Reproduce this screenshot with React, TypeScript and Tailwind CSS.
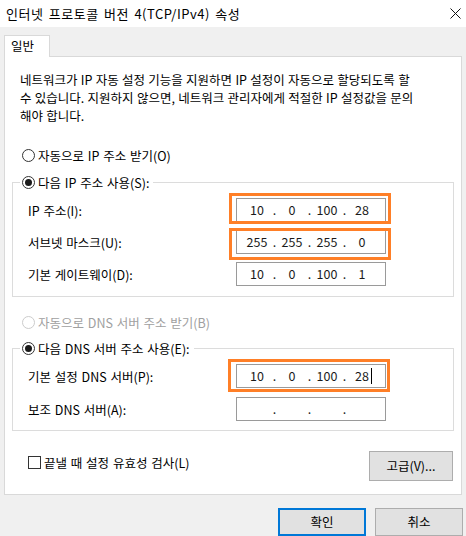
import React from "react";

const FONT = '"Noto Sans CJK KR", "Noto Sans", sans-serif';

function Radio({ checked, disabled }: { checked?: boolean; disabled?: boolean }) {
  return (
    <span
      className={`flex h-[13px] w-[13px] shrink-0 items-center justify-center rounded-full border bg-white ${
        disabled ? "border-[#cccccc]" : "border-[#333333]"
      }`}
    >
      {checked && <span className="h-[7px] w-[7px] rounded-full bg-[#1a1a1a]" />}
    </span>
  );
}

function IpBox({ parts, cursor }: { parts: string[]; cursor?: boolean }) {
  return (
    <div className="flex h-[24px] w-[150px] items-center border border-[#9a9a9a] bg-white pl-[5px] text-[12.5px] leading-none text-[#1a1a1a]">
      {parts.map((p, i) => (
        <React.Fragment key={i}>
          <span className="relative flex w-[30px] justify-center">
            {p}
            {cursor && i === 3 && (
              <span className="absolute right-[5px] top-[-2px] h-[16px] w-px bg-black" />
            )}
          </span>
          {i < 3 && <span className="flex w-[5px] justify-center">.</span>}
        </React.Fragment>
      ))}
    </div>
  );
}

function Field({
  label,
  parts,
  cursor,
  mark,
}: {
  label: string;
  parts: string[];
  cursor?: boolean;
  mark?: string;
}) {
  return (
    <div className="flex h-[24px] items-center">
      <span className="w-[208px] leading-[17px] [word-spacing:1px]">{label}</span>
      <div className="relative">
        <IpBox parts={parts} cursor={cursor} />
        {mark && <div className={`pointer-events-none absolute border-[3px] border-[#ff7f27] ${mark}`} />}
      </div>
    </div>
  );
}

function Button({ children, primary, className }: { children: React.ReactNode; primary?: boolean; className?: string }) {
  return (
    <div
      className={`flex items-center justify-center border bg-[#e1e1e1] text-[12.5px] ${
        primary ? "border-[#0078d7] shadow-[inset_0_0_0_1px_#0078d7]" : "border-[#adadad]"
      } ${className ?? ""}`}
    >
      {children}
    </div>
  );
}

export default function App() {
  return (
    <div
      className="flex h-[536px] w-[466px] flex-col overflow-hidden bg-[#f0f0f0] text-[12.5px] text-black"
      style={{ fontFamily: FONT }}
    >
      {/* Title bar */}
      <div className="flex h-[27px] shrink-0 items-center justify-between bg-white pl-[6px] pr-[6px]">
        <span className="text-[13px] leading-none tracking-[0.5px] [word-spacing:2px]">
          인터넷 프로토콜 버전 4(TCP/IPv4) 속성
        </span>
        <svg width="11" height="11" viewBox="0 0 11 11" className="mr-[-1px]">
          <path d="M0.5 0.5 L10.5 10.5 M10.5 0.5 L0.5 10.5" stroke="#111" strokeWidth="1" />
        </svg>
      </div>

      {/* Tab */}
      <div className="ml-[4px] mt-[8px] flex">
        <div className="relative z-10 -mb-px flex h-[22px] w-[46px] items-center border border-b-0 border-[#d9d9d9] bg-white pl-[6px] leading-none">
          일반
        </div>
      </div>

      {/* Panel */}
      <div className="mx-[4px] flex h-[439px] flex-col border border-[#d9d9d9] bg-white">
        <div className="pl-[15px] pt-[14px] leading-[18px] [word-spacing:0.5px]">
          <div>네트워크가 IP 자동 설정 기능을 지원하면 IP 설정이 자동으로 할당되도록 할</div>
          <div>수 있습니다. 지원하지 않으면, 네트워크 관리자에게 적절한 IP 설정값을 문의</div>
          <div>해야 합니다.</div>
        </div>

        <div className="ml-[17px] mt-[22px] flex h-[17px] items-center gap-[3px] [word-spacing:1px]">
          <Radio />
          <span className="leading-[17px]">자동으로 IP 주소 받기(O)</span>
        </div>

        {/* Group 1 */}
        <div className="mx-[7px] mt-[18px] flex flex-col border border-[#dcdcdc] pb-[10px] pl-[15px]">
          <div className="-mt-[9px] ml-[-8px] flex h-[17px] w-fit items-center gap-[3px] bg-white pl-[2px] pr-[4px] [word-spacing:1px]">
            <Radio checked />
            <span className="leading-[17px]">다음 IP 주소 사용(S):</span>
          </div>
          <div className="mt-[7px] flex flex-col gap-[8px]">
            <Field
              label="IP 주소(I):"
              parts={["10", "0", "100", "28"]}
              mark="-left-[7px] -right-[5px] -top-[5px] -bottom-[2px]"
            />
            <Field
              label="서브넷 마스크(U):"
              parts={["255", "255", "255", "0"]}
              mark="-left-[7px] -right-[5px] -top-[2px] -bottom-[6px]"
            />
            <Field label="기본 게이트웨이(D):" parts={["10", "0", "100", "1"]} />
          </div>
        </div>

        <div className="ml-[17px] mt-[17px] flex h-[17px] items-center gap-[3px] text-[#a0a0a0] [word-spacing:1px]">
          <Radio disabled />
          <span className="leading-[17px]">자동으로 DNS 서버 주소 받기(B)</span>
        </div>

        {/* Group 2 */}
        <div className="mx-[7px] mt-[17px] flex flex-col border border-[#dcdcdc] pb-[9px] pl-[15px]">
          <div className="-mt-[9px] ml-[-8px] flex h-[17px] w-fit items-center gap-[3px] bg-white pl-[2px] pr-[4px] [word-spacing:1px]">
            <Radio checked />
            <span className="leading-[17px]">다음 DNS 서버 주소 사용(E):</span>
          </div>
          <div className="mt-[7px] flex flex-col gap-[9px]">
            <Field
              label="기본 설정 DNS 서버(P):"
              parts={["10", "0", "100", "28"]}
              cursor
              mark="-left-[8px] -right-[4px] -top-[5px] -bottom-[4px]"
            />
            <Field label="보조 DNS 서버(A):" parts={["", "", "", ""]} />
          </div>
        </div>

        <div className="mt-[20px] flex items-start justify-between pl-[23px] pr-[8px]">
          <div className="mt-[3px] flex h-[17px] items-center gap-[3px] [word-spacing:1px]">
            <span className="h-[13px] w-[13px] border border-[#333333] bg-white" />
            <span className="leading-[17px]">끝낼 때 설정 유효성 검사(L)</span>
          </div>
          <Button className="h-[30px] w-[84px]">고급(V)...</Button>
        </div>
      </div>

      {/* Bottom buttons */}
      <div className="mt-[13px] flex justify-end gap-[9px] pr-[3px]">
        <Button primary className="h-[28px] w-[88px]">
          확인
        </Button>
        <Button className="h-[28px] w-[88px]">취소</Button>
      </div>
    </div>
  );
}
